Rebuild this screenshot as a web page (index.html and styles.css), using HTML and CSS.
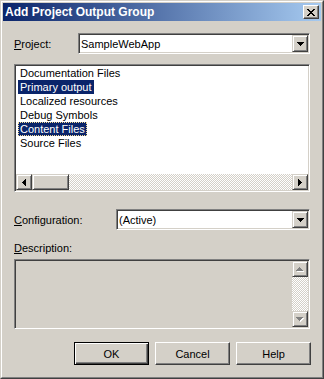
FILE: index.html
```html
<!DOCTYPE html>
<html>
<head>
    <title>Add Project Output Group</title>
    <meta http-equiv="Content-Type" content="text/html;charset=utf-8">
    <link rel="stylesheet" href="styles.css">
</head>
<body>
<div class="window">
  <div class="frame">
    <div class="titlebar">
      <span class="title">Add Project Output Group</span>
      <div class="close">
        <svg width="8" height="7" viewBox="0 0 8 7"><path d="M0 0h2v1H0z M6 0h2v1H6z M1 1h2v1H1z M5 1h2v1H5z M2 2h4v1H2z M3 3h2v1H3z M2 4h4v1H2z M1 5h2v1H1z M5 5h2v1H5z M0 6h2v1H0z M6 6h2v1H6z" fill="#000"/></svg>
      </div>
    </div>
    <div class="content">
      <div class="row project">
        <div class="label"><u>P</u>roject:</div>
        <div class="combo">
          <span class="combo-text">SampleWebApp</span>
          <div class="bevel drop"><svg width="7" height="4" viewBox="0 0 7 4"><path d="M0 0h7v1H0z M1 1h5v1H1z M2 2h3v1H2z M3 3h1v1H3z" fill="#000"/></svg></div>
        </div>
      </div>

      <div class="listbox">
        <div class="items">
          <div class="item">Documentation Files</div>
          <div class="item selected">Primary output</div>
          <div class="item">Localized resources</div>
          <div class="item">Debug Symbols</div>
          <div class="item selected focus">Content Files</div>
          <div class="item">Source Files</div>
        </div>
        <div class="hscroll">
          <div class="bevel sb-btn"><svg width="4" height="7" viewBox="0 0 4 7"><path d="M3 0h1v7H3z M2 1h1v5H2z M1 2h1v3H1z M0 3h1v1H0z" fill="#000"/></svg></div>
          <div class="bevel thumb"></div>
          <div class="track"></div>
          <div class="bevel sb-btn"><svg width="4" height="7" viewBox="0 0 4 7"><path d="M0 0h1v7H0z M1 1h1v5H1z M2 2h1v3H2z M3 3h1v1H3z" fill="#000"/></svg></div>
        </div>
      </div>

      <div class="row config">
        <div class="label"><u>C</u>onfiguration:</div>
        <div class="combo">
          <span class="combo-text">(Active)</span>
          <div class="bevel drop"><svg width="7" height="4" viewBox="0 0 7 4"><path d="M0 0h7v1H0z M1 1h5v1H1z M2 2h3v1H2z M3 3h1v1H3z" fill="#000"/></svg></div>
        </div>
      </div>

      <div class="caption"><u>D</u>escription:</div>
      <div class="desc">
        <div class="desc-body"></div>
        <div class="vscroll">
          <div class="bevel sb-btn"><svg width="8" height="5" viewBox="0 0 8 5"><path d="M4 1h1v1H4z M3 2h3v1H3z M2 3h5v1H2z M1 4h7v1H1z" fill="#fff"/><path d="M3 0h1v1H3z M2 1h3v1H2z M1 2h5v1H1z M0 3h7v1H0z" fill="#808080"/></svg></div>
          <div class="track"></div>
          <div class="bevel sb-btn"><svg width="8" height="5" viewBox="0 0 8 5"><path d="M1 1h7v1H1z M2 2h5v1H2z M3 3h3v1H3z M4 4h1v1H4z" fill="#fff"/><path d="M0 0h7v1H0z M1 1h5v1H1z M2 2h3v1H2z M3 3h1v1H3z" fill="#808080"/></svg></div>
        </div>
      </div>

      <div class="buttons">
        <div class="btn default">OK</div>
        <div class="btn">Cancel</div>
        <div class="btn">Help</div>
      </div>
    </div>
  </div>
</div>
</body>
</html>
```

FILE: styles.css
```css
body{margin:0;padding:0;background:#d4d0c8;font-family:Tahoma,"Liberation Sans",Arial,sans-serif;font-size:11px;color:#000;}
.window{width:324px;height:379px;box-sizing:border-box;border:1px solid;border-color:#d4d0c8 #404040 #404040 #d4d0c8;background:#d4d0c8;}
.frame{height:100%;box-sizing:border-box;border:1px solid;border-color:#fff #808080 #808080 #fff;padding:1px;display:flex;flex-direction:column;}

.titlebar{height:18px;display:flex;align-items:center;padding:0 2px;background:linear-gradient(to right,#0a246a,#a6caf0);}
.titlebar .title{flex:1;color:#fff;font-weight:bold;font-size:12px;}
.close{width:16px;height:14px;box-sizing:border-box;border:1px solid;border-color:#fff #404040 #404040 #fff;box-shadow:inset -1px -1px #808080;background:#d4d0c8;display:flex;align-items:center;justify-content:center;}
.close svg{margin-left:-1px;}

.content{padding:12px 11px 0 11px;}
.row{display:flex;align-items:center;height:21px;}
.row .label{width:64px;}
.row.config{margin-top:17px;}
.row.config .label{width:102px;}

.combo{flex:1;height:21px;box-sizing:border-box;border:1px solid;border-color:#808080 #fff #fff #808080;box-shadow:inset 1px 1px #404040,inset -1px -1px #d4d0c8;background:#fff;display:flex;align-items:center;padding:0 1px 0 2px;}
.combo-text{flex:1;}

.bevel{box-sizing:border-box;border:1px solid;border-color:#d4d0c8 #404040 #404040 #d4d0c8;box-shadow:inset 1px 1px #fff,inset -1px -1px #808080;background:#d4d0c8;display:flex;align-items:center;justify-content:center;}
.drop{width:16px;height:17px;}

.listbox{margin-top:10px;height:128px;box-sizing:border-box;border:1px solid;border-color:#808080 #fff #fff #808080;box-shadow:inset 1px 1px #404040,inset -1px -1px #d4d0c8;background:#fff;padding:1px;display:flex;flex-direction:column;}
.items{flex:1;}
.item{width:fit-content;height:14px;line-height:14px;padding:0 2px;margin-left:2px;box-sizing:border-box;}
.item.selected{background:#0a246a;color:#fff;}
.item.focus{outline:1px dotted #f5db95;outline-offset:-1px;}

.hscroll{height:16px;display:flex;}
.sb-btn{width:16px;height:16px;flex:none;}
.thumb{width:37px;height:16px;}
.track{flex:1;background:repeating-conic-gradient(#fff 0 25%,#d4d0c8 0 50%) 0 0/2px 2px;}

.caption{margin-top:12px;height:13px;line-height:13px;}
.desc{margin-top:4px;height:70px;box-sizing:border-box;border:1px solid;border-color:#808080 #fff #fff #808080;box-shadow:inset 1px 1px #404040,inset -1px -1px #d4d0c8;padding:1px;display:flex;}
.desc-body{flex:1;}
.vscroll{width:16px;display:flex;flex-direction:column;}

.buttons{margin-top:13px;display:flex;justify-content:flex-end;gap:6px;margin-right:-1px;}
.btn{width:75px;height:23px;box-sizing:border-box;border:1px solid;border-color:#fff #404040 #404040 #fff;box-shadow:inset -1px -1px #808080;display:flex;align-items:center;justify-content:center;}
.btn.default{border-color:#000;box-shadow:inset 1px 1px #fff,inset -1px -1px #404040,inset -2px -2px #808080;}
```
